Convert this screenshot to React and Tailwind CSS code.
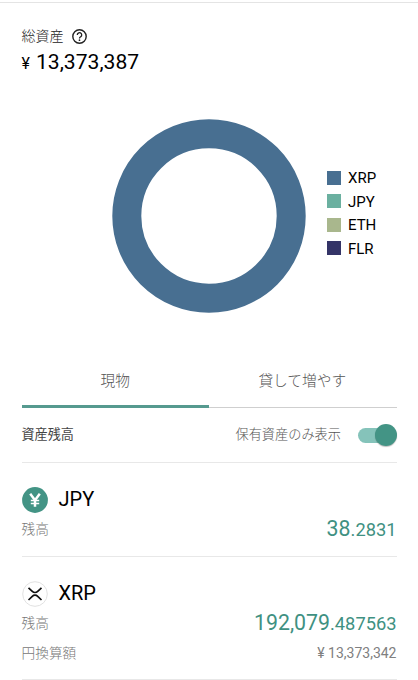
import React from "react";

const legend = [
  { name: "XRP", color: "bg-[#486f91]" },
  { name: "JPY", color: "bg-[#6bb0a0]" },
  { name: "ETH", color: "bg-[#a9b78d]" },
  { name: "FLR", color: "bg-[#343467]" },
];

function HelpIcon() {
  return (
    <svg className="w-[15px] h-[15px] mt-px" viewBox="0 0 15 15" fill="none">
      <circle cx="7.5" cy="7.5" r="6.7" stroke="#222" strokeWidth="1.4" />
      <path
        d="M5.3 6a2.2 2.2 0 1 1 3.5 1.7c-.8.6-1.3.9-1.3 1.8"
        stroke="#222"
        strokeWidth="1.3"
      />
      <circle cx="7.5" cy="11.2" r="0.85" fill="#222" />
    </svg>
  );
}

function YenIcon() {
  return (
    <svg className="w-[26px] h-[26px] -mt-[2px]" viewBox="0 0 26 26" fill="none">
      <circle cx="13" cy="13" r="12.9" fill="#439485" />
      <path d="M8.2 6.7l4.8 6.5 4.8-6.5M13 13v6.8" stroke="#fff" strokeWidth="2.5" />
      <path d="M8.8 13.5h8.4M8.8 16.5h8.4" stroke="#fff" strokeWidth="1.5" />
    </svg>
  );
}

function XrpIcon() {
  return (
    <svg className="w-[26px] h-[26px] -mt-px" viewBox="0 0 26 26" fill="none">
      <circle cx="13" cy="13" r="12.3" fill="#fff" stroke="#dedede" strokeWidth="0.9" />
      <path
        d="M6.5 6.8l3.8 3.6a3.9 3.9 0 0 0 5.4 0l3.8-3.6M6.5 19l3.8-3.7a3.9 3.9 0 0 1 5.4 0l3.8 3.7"
        stroke="#111"
        strokeWidth="1.7"
      />
    </svg>
  );
}

function Asset({ icon, name, whole, decimal, children }) {
  return (
    <div className="pt-[23px] border-b border-[#e8e8e8]">
      <div className="flex items-center h-[29px]">
        {icon}
        <span className="ml-[11px] mb-[4px] text-[20px] leading-[24px] text-black">
          {name}
        </span>
      </div>
      <div className="flex items-center justify-between h-[28px]">
        <span className="text-[13.7px] font-light text-[#777]">残高</span>
        <span className="text-[21.3px] leading-[28px] text-[#3f9182]">
          {whole}
          <span className="text-[18.3px]">.{decimal}</span>
        </span>
      </div>
      {children}
    </div>
  );
}

function App() {
  return (
    <div className="w-[418px] h-[680px] overflow-hidden bg-white pt-[2px] font-['Roboto','Noto_Sans_CJK_JP',sans-serif]">
      <div className="border-t border-[#e4e4e4] pl-[21.5px] pr-[21.5px]">
        <div className="flex items-center gap-[8.5px] h-[20px] mt-[23px]">
          <span className="text-[14px] font-light text-[#222]">総資産</span>
          <HelpIcon />
        </div>
        <div className="flex items-baseline h-[28px] leading-[28px] mt-[2px] text-black">
          <span className="text-[16px] w-[14.5px]">¥</span>
          <span className="text-[21.1px]">13,373,387</span>
        </div>

        <div className="flex items-center h-[194px] mt-[43px] ml-[90.5px]">
          <svg className="w-[194px] h-[194px]" viewBox="0 0 194 194" fill="none">
            <circle cx="97" cy="97" r="82.2" stroke="#486f91" strokeWidth="29" />
          </svg>
          <ul className="ml-[21px] -mt-[6px]">
            {legend.map((item) => (
              <li key={item.name} className="flex items-center gap-[7px] h-[23.6px]">
                <span className={`w-[14px] h-[14px] ${item.color}`}></span>
                <span className="pt-px text-[15px] leading-[18px] text-black">
                  {item.name}
                </span>
              </li>
            ))}
          </ul>
        </div>

        <div className="flex h-[54px] mt-[41px] text-[14.7px] font-light text-[#555]">
          <button className="w-[187.5px] h-[54px] pt-[4px] border-b-[3px] border-[#569a8f]">
            現物
          </button>
          <button className="flex-1 h-[54px] pt-[2px] pr-px border-b border-[#cfcfcf]">
            貸して増やす
          </button>
        </div>

        <div className="flex items-center h-[55px] border-b border-[#e8e8e8]">
          <span className="text-[13.1px] text-[#444]">資産残高</span>
          <span className="ml-auto text-[13.2px] font-light text-[#555]">
            保有資産のみ表示
          </span>
          <div className="flex items-center justify-end w-[39px] h-[15px] ml-[16.5px] rounded-l-full bg-[linear-gradient(to_right,#85c3ba_28px,transparent_28px)]">
            <div className="w-[22px] h-[22px] rounded-full bg-[#439485] shadow-[0_1px_1px_rgba(0,0,0,0.25)]"></div>
          </div>
        </div>

        <Asset icon={<YenIcon />} name="JPY" whole="38" decimal="2831">
          <div className="h-[13px]"></div>
        </Asset>
        <Asset icon={<XrpIcon />} name="XRP" whole="192,079" decimal="487563">
          <div className="flex items-center justify-between h-[42px] pb-[9px]">
            <span className="text-[13.7px] font-light text-[#777]">円換算額</span>
            <span className="text-[14px] text-[#808080]">¥ 13,373,342</span>
          </div>
        </Asset>
      </div>
    </div>
  );
}

export default App;
